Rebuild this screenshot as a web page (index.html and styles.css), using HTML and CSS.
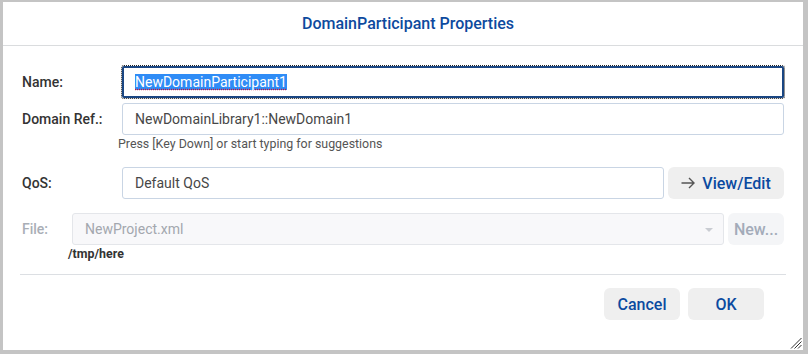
FILE: index.html
```html
<!DOCTYPE html>
<html>
<head>
<meta charset="utf-8">
<link rel="stylesheet" href="styles.css">
</head>
<body>
<div class="dialog">
  <div class="header"><span class="title">DomainParticipant Properties</span></div>
  <div class="content">
    <div class="row">
      <div class="label">Name:</div>
      <div class="input focused"><span class="sel">NewDomainParticipant1</span></div>
    </div>
    <div class="row row-domain">
      <div class="label">Domain Ref.:</div>
      <div class="input">NewDomainLibrary1::NewDomain1</div>
    </div>
    <div class="hint">Press [Key Down] or start typing for suggestions</div>
    <div class="row row-qos">
      <div class="label">QoS:</div>
      <div class="input">Default QoS</div>
      <button class="btn btn-view"><svg class="arrow" width="14" height="12" viewBox="0 0 14 12"><path d="M0.5 6 H13 M8 1 L13 6 L8 11" fill="none" stroke="#555" stroke-width="1.4"/></svg>View/Edit</button>
    </div>
    <div class="row row-file">
      <div class="label label-file">File:</div>
      <div class="input select">NewProject.xml<span class="caret"></span></div>
      <button class="btn btn-new">New...</button>
    </div>
    <div class="path">/tmp/here</div>
    <div class="sep"></div>
    <div class="footer">
      <button class="btn btn-foot">Cancel</button>
      <button class="btn btn-foot">OK</button>
    </div>
  </div>
  <svg class="grip" width="12" height="12" viewBox="0 0 12 12"><path d="M1 11.5 L11.5 1 M4.5 11.5 L11.5 4.5 M8 11.5 L11.5 8" stroke="#333" stroke-width="1"/></svg>
</div>
</body>
</html>
```
FILE: styles.css
```css
html, body {
  margin: 0;
  padding: 0;
}
body {
  background: #c4c4c4;
  font-family: Roboto, "Liberation Sans", sans-serif;
  width: 808px;
  height: 354px;
  overflow: hidden;
}
.dialog {
  position: relative;
  margin: 2px 0 0 3px;
  width: 800px;
  height: 348px;
  background: #fff;
  box-sizing: border-box;
}
.header {
  height: 43px;
  border-bottom: 1px solid #dadcde;
  display: flex;
  align-items: center;
  justify-content: center;
  padding-left: 10px;
}
.title {
  font-size: 16px;
  font-weight: 500;
  color: #0d4a9e;
}
.content {
  padding: 20px 17px 0 17px;
}
.row {
  display: flex;
  align-items: center;
  padding: 0 2px;
}
.row-domain { margin-top: 5px; }
.row-qos { margin-top: 15px; }
.row-file { margin-top: 14px; }
.label {
  width: 100px;
  flex: none;
  font-size: 14px;
  font-weight: 500;
  color: #333;
}
.label-file {
  width: 50px;
  color: #a9aeb6;
}
.input {
  flex: 1;
  height: 32px;
  box-sizing: border-box;
  border: 1px solid #c9d5e4;
  border-radius: 3px;
  padding: 0 12px;
  display: flex;
  align-items: center;
  font-size: 14px;
  color: #474747;
  position: relative;
}
.focused {
  border: 2px solid #1a4682;
  outline: 1px dotted #222;
  outline-offset: 0;
  border-radius: 2px;
  padding-left: 11px;
}
.sel {
  background: #2f8cf6;
  color: #fff;
  line-height: 16px;
  text-decoration: underline dotted #d01030;
  text-underline-offset: 2px;
}
.hint {
  margin-left: 98px;
  font-size: 12.4px;
  line-height: 17px;
  color: #555;
}
.select {
  background: #f8f8fa;
  border-color: #e4e6ea;
  color: #a3a7ae;
}
.caret {
  position: absolute;
  right: 10px;
  top: 14px;
  width: 0;
  height: 0;
  border-left: 4px solid transparent;
  border-right: 4px solid transparent;
  border-top: 4px solid #c9ccd2;
}
.btn {
  height: 32px;
  border: none;
  border-radius: 6px;
  background: #efefef;
  font-family: Roboto, "Liberation Sans", sans-serif;
  font-size: 16px;
  font-weight: 500;
  color: #0b4aa0;
  padding: 0;
  display: flex;
  align-items: center;
  justify-content: center;
  flex: none;
}
.btn-view {
  margin-left: 4px;
  width: 116px;
  gap: 7px;
}
.btn-new {
  margin-left: 4px;
  width: 56px;
  background: #f4f5f7;
  color: #a3abb9;
}
.path {
  margin-left: 48px;
  font-size: 12.4px;
  font-weight: 700;
  line-height: 17px;
  color: #333;
}
.sep {
  margin-top: 12px;
  height: 1px;
  background: #dcdfe3;
}
.footer {
  margin-top: 13px;
  display: flex;
  justify-content: flex-end;
  gap: 8px;
  padding-right: 22px;
}
.btn-foot {
  width: 76px;
}
.grip {
  position: absolute;
  right: 1px;
  bottom: 1px;
}
```
